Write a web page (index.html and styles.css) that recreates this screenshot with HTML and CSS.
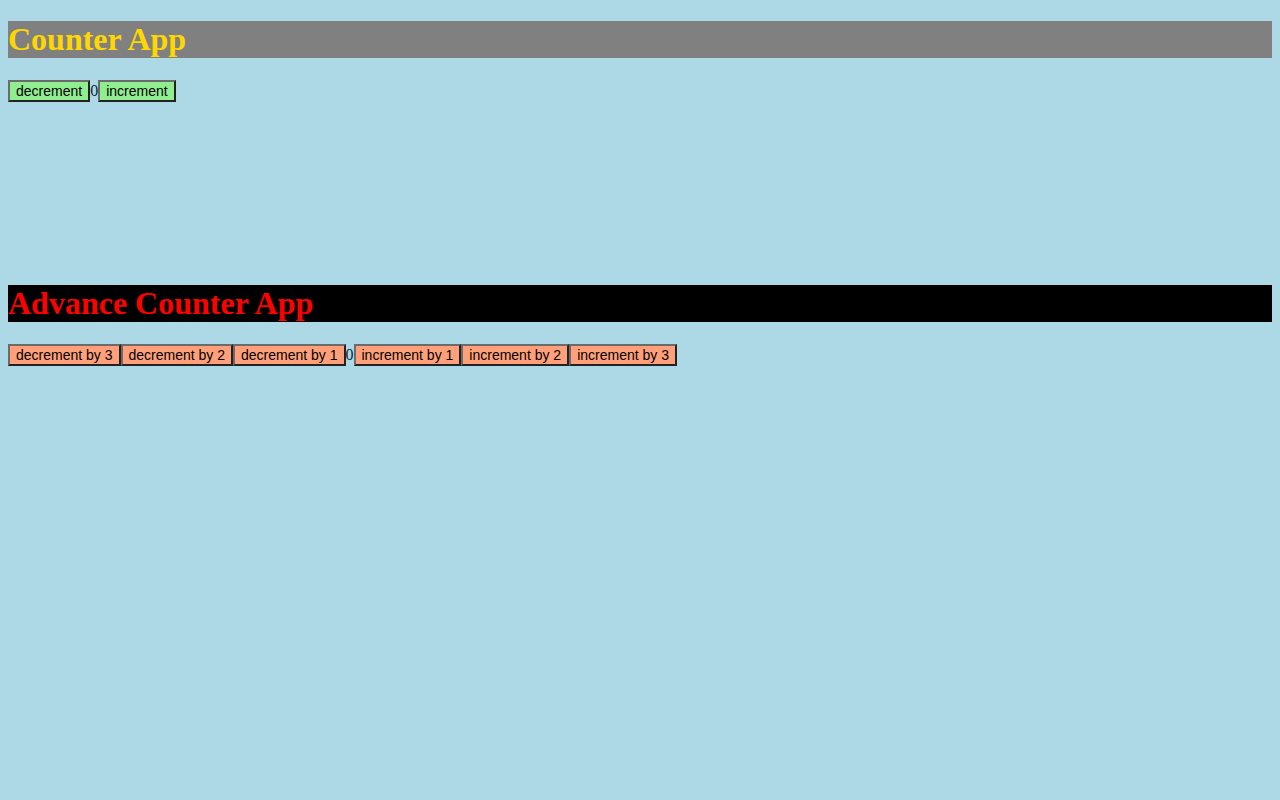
FILE: index.html
```html
<!DOCTYPE html>
<html>
<head>
<meta charset="utf-8">
<title>Counter App</title>
<link rel="stylesheet" href="styles.css">
</head>
<body>
<div class="counter">
<h1 class="title title-basic">Counter App</h1>
<div class="controls"><button class="btn btn-green">decrement</button><span class="count">0</span><button class="btn btn-green">increment</button></div>
</div>
<div class="counter counter-advanced">
<h1 class="title title-advanced">Advance Counter App</h1>
<div class="controls"><button class="btn btn-salmon">decrement by 3</button><button class="btn btn-salmon">decrement by 2</button><button class="btn btn-salmon">decrement by 1</button><span class="count">0</span><button class="btn btn-salmon">increment by 1</button><button class="btn btn-salmon">increment by 2</button><button class="btn btn-salmon">increment by 3</button></div>
</div>
</body>
</html>
```
FILE: styles.css
```css
html {
  background: #add8e6;
}
body {
  margin: 0 8px 8px;
  font-family: "Liberation Serif", "Times New Roman", serif;
  font-size: 16px;
  color: #000;
}
.counter {
  margin-bottom: 183px;
}
.title {
  margin: 21.44px 0;
  font-size: 32px;
  font-weight: bold;
  line-height: 37px;
}
.title-basic {
  background: #808080;
  color: #ffd700;
}
.title-advanced {
  background: #000;
  color: #ff0000;
  margin-bottom: 22.3px;
}
.controls {
  line-height: 22px;
}
.count {
  color: #0d1f3a;
}
.btn {
  font-family: "Liberation Sans", Arial, sans-serif;
  font-size: 14px;
  padding: 1px 6px;
  border: 2px solid;
  border-color: #6b6b6b #222 #222 #6b6b6b;
  height: 22px;
  color: #000;
  margin: 0;
  vertical-align: baseline;
}
.btn-green {
  background: #90ee90;
}
.btn-salmon {
  background: #ffa07a;
}
```
